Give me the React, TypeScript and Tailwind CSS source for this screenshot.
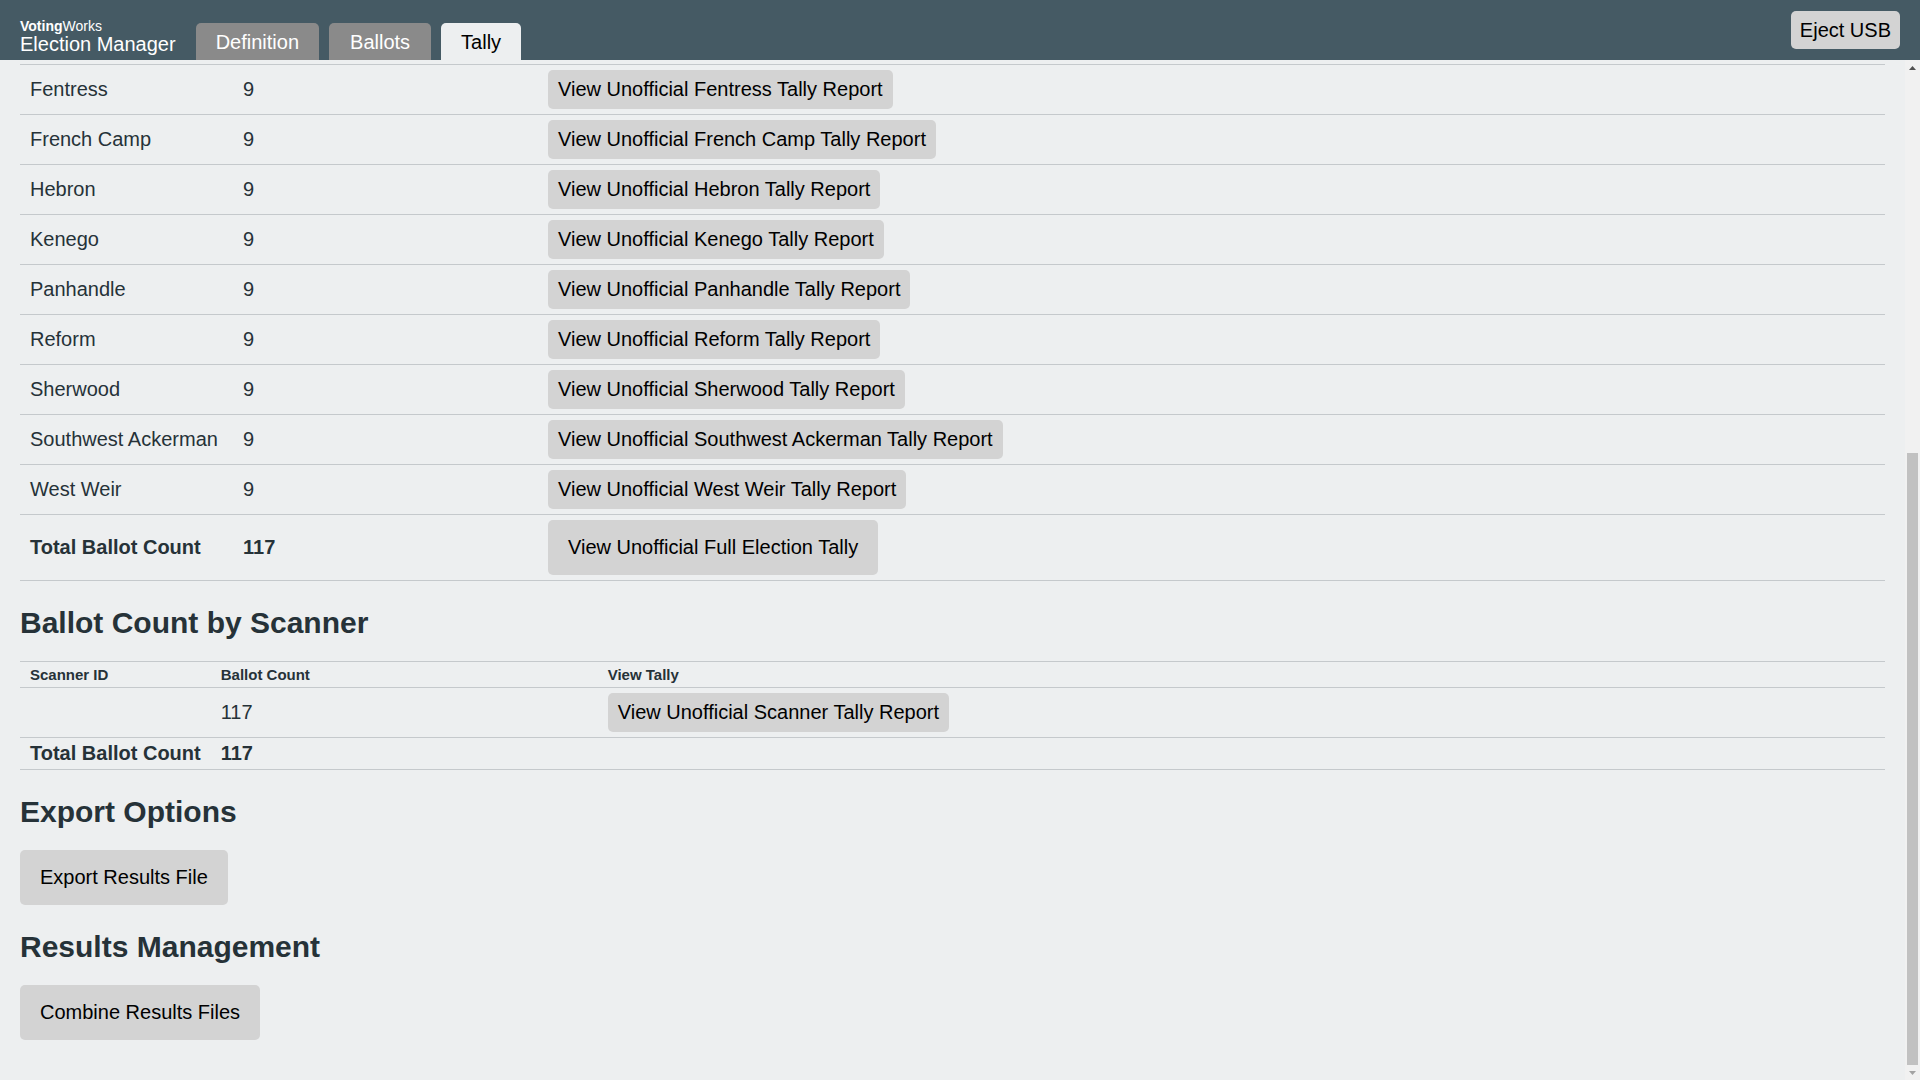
import React, { useLayoutEffect, useRef } from "react";

const font = { fontFamily: '"Liberation Sans", Arial, Helvetica, sans-serif' };

const precincts = [
  "Bywy",
  "Chester",
  "District 5",
  "East Weir",
  "Fentress",
  "French Camp",
  "Hebron",
  "Kenego",
  "Panhandle",
  "Reform",
  "Sherwood",
  "Southwest Ackerman",
  "West Weir",
];

const SmallButton: React.FC<{ children: React.ReactNode }> = ({ children }) => (
  <button className="rounded-[5px] bg-[#d3d3d3] px-[10px] py-[6px] text-[20px] leading-[27px] text-black">
    {children}
  </button>
);

const BigButton: React.FC<{ children: React.ReactNode }> = ({ children }) => (
  <button className="rounded-[5px] bg-[#d3d3d3] px-5 py-[14px] text-[20px] leading-[27px] text-black">
    {children}
  </button>
);

const Header: React.FC = () => (
  <header className="flex h-[60px] shrink-0 items-end justify-between bg-[#455a64] px-5">
    <div className="flex items-end gap-5">
      <div className="pb-[6px] text-white">
        <div className="text-[14px] leading-[15px]">
          <span className="font-bold">Voting</span>Works
        </div>
        <div className="text-[20px] leading-[20px]">Election Manager</div>
      </div>
      <nav className="flex gap-[10px]">
        <span className="rounded-t-[5px] bg-[#8a8a8a] px-5 pt-[6px] pb-[4px] text-[20px] leading-[27px] text-white">
          Definition
        </span>
        <span className="rounded-t-[5px] bg-[#8a8a8a] px-[21px] pt-[6px] pb-[4px] text-[20px] leading-[27px] text-white">
          Ballots
        </span>
        <span className="rounded-t-[5px] bg-[#edeff0] px-5 pt-[6px] pb-[4px] text-[20px] leading-[27px] text-black">
          Tally
        </span>
      </nav>
    </div>
    <button className="mb-[11px] rounded-[5px] bg-[#d3d3d3] px-[9px] py-[5px] text-[20px] leading-[28px] text-black">
      Eject USB
    </button>
  </header>
);

// classic scrollbar look, content is scrolled to the bottom
const ScrollRail: React.FC = () => (
  <div className="flex w-[15px] shrink-0 flex-col bg-[#f1f1f1]">
    <div className="flex h-[15px] items-center justify-center">
      <svg width="7" height="4" viewBox="0 0 7 4">
        <path d="M3.5 0 L7 4 L0 4 Z" fill="#505050" />
      </svg>
    </div>
    <div className="flex-1" />
    <div className="mx-[2px] h-[612px] bg-[#c1c1c1]" />
    <div className="flex h-[15px] items-center justify-center">
      <svg width="7" height="4" viewBox="0 0 7 4">
        <path d="M0 0 L7 0 L3.5 4 Z" fill="#a3a3a3" />
      </svg>
    </div>
  </div>
);

const H2: React.FC<{ children: React.ReactNode }> = ({ children }) => (
  <h2 className="mt-6 mb-5 text-[30px] leading-[36px] font-bold">{children}</h2>
);

const th = "border-b border-[#c5c9cc] px-[10px] py-[4px] text-left text-[15px] leading-[17px] font-bold";
const td = "border-b border-[#c5c9cc] px-[10px] py-[5px] text-[20px] leading-[39px]";

export default function App() {
  const mainRef = useRef<HTMLDivElement>(null);

  useLayoutEffect(() => {
    if (mainRef.current) mainRef.current.scrollTop = mainRef.current.scrollHeight;
  }, []);

  return (
    <div className="flex h-screen flex-col bg-[#edeff0] text-[#263238]" style={font}>
      <Header />
      <div className="flex min-h-0 flex-1">
        <main
          ref={mainRef}
          className="min-w-0 flex-1 overflow-y-auto px-5 pt-[12px] pb-10 [scrollbar-width:none]"
        >
          <h1 className="mb-5 text-[40px] leading-[48px] font-bold">Cast Vote Record (CVR) files</h1>
          <p className="mb-5 text-[20px] leading-[27px]">
            The following CVR files have been loaded. Reports below include all loaded ballots.
          </p>
          <table className="w-full border-t border-[#c5c9cc]">
            <thead>
              <tr>
                <th className={th}>File Exported At</th>
                <th className={th}>CVR Count</th>
                <th className={th}>Source</th>
                <th className={th}>Precinct(s)</th>
              </tr>
            </thead>
            <tbody>
              <tr>
                <td className={td}>12/07/2020 10:15:38 AM</td>
                <td className={td}>117</td>
                <td className={td}>scanner-0001</td>
                <td className={td}>All Precincts</td>
              </tr>
              <tr>
                <td className={`${td} font-bold`}>Total CVR Count</td>
                <td className={`${td} font-bold`}>117</td>
                <td className={td}></td>
                <td className={td}></td>
              </tr>
            </tbody>
          </table>
          <div className="mt-5 flex gap-[10px]">
            <BigButton>Import CVR Files</BigButton>
            <BigButton>Remove CVR Files…</BigButton>
          </div>

          <H2>Ballot Count by Precinct</H2>
          <table className="w-full border-t border-[#c5c9cc]">
            <thead>
              <tr>
                <th className={`${th} w-[213px]`}>Precinct</th>
                <th className={`${th} w-[305px]`}>Ballot Count</th>
                <th className={th}>View Tally</th>
              </tr>
            </thead>
            <tbody>
              {precincts.map((p) => (
                <tr key={p}>
                  <td className={`${td} whitespace-nowrap`}>{p}</td>
                  <td className={td}>9</td>
                  <td className={td}>
                    <SmallButton>View Unofficial {p} Tally Report</SmallButton>
                  </td>
                </tr>
              ))}
              <tr>
                <td className={`${td} font-bold leading-[55px]`}>Total Ballot Count</td>
                <td className={`${td} font-bold leading-[55px]`}>117</td>
                <td className={td}>
                  <BigButton>View Unofficial Full Election Tally</BigButton>
                </td>
              </tr>
            </tbody>
          </table>

          <H2>Ballot Count by Scanner</H2>
          <table className="w-full border-t border-[#c5c9cc]">
            <thead>
              <tr>
                <th className={`${th} w-[190px]`}>Scanner ID</th>
                <th className={`${th} w-[387px]`}>Ballot Count</th>
                <th className={th}>View Tally</th>
              </tr>
            </thead>
            <tbody>
              <tr>
                <td className={td}></td>
                <td className={td}>117</td>
                <td className={td}>
                  <SmallButton>View Unofficial Scanner Tally Report</SmallButton>
                </td>
              </tr>
              <tr>
                <td className="border-b border-[#c5c9cc] px-[10px] py-[5px] text-[20px] leading-[21px] font-bold whitespace-nowrap">
                  Total Ballot Count
                </td>
                <td className="border-b border-[#c5c9cc] px-[10px] py-[5px] text-[20px] leading-[21px] font-bold">117</td>
                <td className="border-b border-[#c5c9cc] px-[10px] py-[5px]"></td>
              </tr>
            </tbody>
          </table>

          <H2>Export Options</H2>
          <BigButton>Export Results File</BigButton>

          <H2>Results Management</H2>
          <BigButton>Combine Results Files</BigButton>
        </main>
        <ScrollRail />
      </div>
    </div>
  );
}
